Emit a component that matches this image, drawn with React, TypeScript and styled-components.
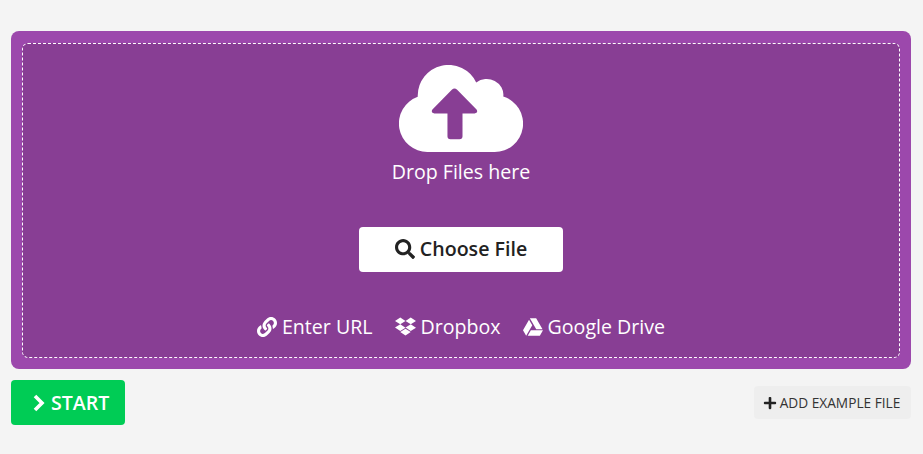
import React from "react";
import styled, { createGlobalStyle } from "styled-components";
import { FaSearch, FaLink, FaDropbox, FaGoogleDrive, FaPlus } from "react-icons/fa";

const Global = createGlobalStyle`
  html, body { margin: 0; padding: 0; background: #f4f4f4; }
  body { font-family: "Open Sans", "Liberation Sans", sans-serif; }
`;

const Page = styled.div`
  padding: 31px 12px 0 11px;
  display: flex;
  flex-direction: column;
  gap: 11px;
`;

const Panel = styled.section`
  background: #9c48ac;
  border-radius: 8px;
  padding: 12px 11px 11px;
  height: 338px;
  box-sizing: border-box;
`;

const DropZone = styled.div`
  height: 315px;
  box-sizing: border-box;
  background: #883e94;
  border: 1px dashed #fff;
  border-radius: 6px;
  display: flex;
  flex-direction: column;
  align-items: center;
  color: #fff;
  padding-top: 21px;
`;

const CloudSvg = styled.svg`
  width: 124px;
  height: 87px;
  display: block;
  flex: none;
`;

const DropText = styled.div`
  font-size: 19.6px;
  line-height: 27px;
  margin-top: 6px;
`;

const ChooseButton = styled.button`
  margin-top: 42px;
  width: 204px;
  height: 45px;
  flex: none;
  background: #fff;
  border: 0;
  border-radius: 4px;
  color: #222;
  font: 600 19.6px "Open Sans", sans-serif;
  display: flex;
  align-items: center;
  justify-content: center;
  gap: 5px;
  padding: 0 0 2px;
`;

const Sources = styled.div`
  margin-top: 41px;
  display: flex;
  gap: 22px;
  font-size: 19.6px;
  line-height: 27px;
`;

const Source = styled.span`
  display: flex;
  align-items: center;
  gap: 5px;
`;

const Actions = styled.div`
  display: flex;
  align-items: flex-start;
  justify-content: space-between;
`;

const StartButton = styled.button`
  width: 114px;
  height: 45px;
  background: #00cc55;
  border: 0;
  border-radius: 4px;
  color: #fff;
  font: 600 19.6px "Open Sans", sans-serif;
  display: flex;
  align-items: center;
  justify-content: flex-start;
  gap: 5px;
  padding: 0 0 0 21px;
`;

const ChevronSvg = styled.svg`
  width: 14px;
  height: 18px;
  flex: none;
`;

const ExampleButton = styled.button`
  margin-top: 6px;
  width: 157px;
  height: 33px;
  background: #eeeeee;
  border: 0;
  border-radius: 4px;
  color: #333;
  font: 400 13.7px "Open Sans", sans-serif;
  display: flex;
  align-items: center;
  justify-content: center;
  gap: 3px;
  padding: 0 2px 0 0;
`;

const PlusIcon = styled(FaPlus)`
  color: #222;
`;

const Cloud = () => (
  <CloudSvg viewBox="57 45 371 260" aria-hidden="true">
    <path
      fill="#fff"
      fillRule="evenodd"
      d="M142 305A85 85 0 0 1 113 140L113 137A92 92 0 0 1 288 97A50 47 0 0 1 369 139A85 85 0 0 1 343 305ZM215 119L157 178Q151 188 163 190H202V258Q202 267 211 267H238Q247 267 247 258V190H283Q295 188 289 178L231 119Q223 112 215 119Z"
    />
  </CloudSvg>
);

const Chevron = () => (
  <ChevronSvg viewBox="0 0 14 18" aria-hidden="true">
    <path d="M3 2L10 9L3 16" fill="none" stroke="#fff" strokeWidth="3.6" />
  </ChevronSvg>
);

export default function App() {
  return (
    <Page>
      <Global />
      <Panel>
        <DropZone>
          <Cloud />
          <DropText>Drop Files here</DropText>
          <ChooseButton><FaSearch size={20} />Choose File</ChooseButton>
          <Sources>
            <Source><FaLink size={20} />Enter URL</Source>
            <Source><FaDropbox size={21} />Dropbox</Source>
            <Source><FaGoogleDrive size={20} />Google Drive</Source>
          </Sources>
        </DropZone>
      </Panel>
      <Actions>
        <StartButton><Chevron />START</StartButton>
        <ExampleButton><PlusIcon size={14} />ADD EXAMPLE FILE</ExampleButton>
      </Actions>
    </Page>
  );
}
